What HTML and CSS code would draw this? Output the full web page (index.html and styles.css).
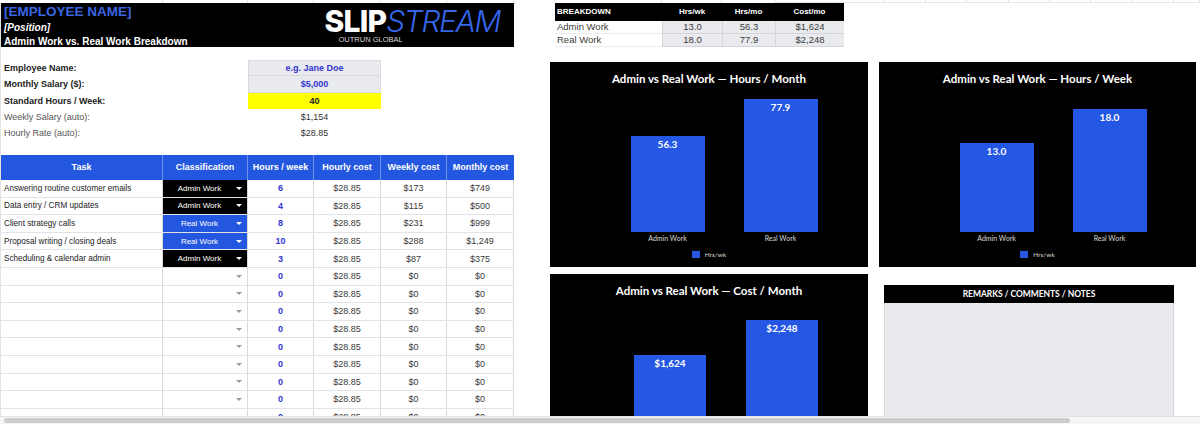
FILE: index.html
```html
<!DOCTYPE html>
<html>
<head>
<meta charset="utf-8">
<title>Admin Work vs. Real Work Breakdown</title>
<link rel="stylesheet" href="styles.css">
</head>
<body>
<div class="topstrip">
  <span></span><span></span><span></span><span></span><span></span><span></span><span></span><span></span><span></span><span></span>
  <span class="tb"></span><span class="tb"></span><span class="tb"></span><span class="tb"></span><span class="tb"></span><span class="tb"></span><span class="tb"></span><span class="tb"></span><span class="tb"></span><span class="tb"></span>
</div>
<div class="main">
  <div class="left">
    <div class="hero">
      <div class="hero-text">
        <div class="hero-name">[EMPLOYEE NAME]</div>
        <div class="hero-pos">[Position]</div>
        <div class="hero-sub">Admin Work vs. Real Work Breakdown</div>
      </div>
      <div class="logo">
        <div class="logo-word"><span class="logo-a">SLIP</span><span class="logo-b">STREAM</span></div>
        <div class="logo-sub">OUTRUN GLOBAL</div>
      </div>
    </div>

    <div class="info">
      <div class="info-row"><div class="info-label strong">Employee Name:</div><div class="info-val input first blue">e.g. Jane Doe</div></div>
      <div class="info-row"><div class="info-label strong">Monthly Salary ($):</div><div class="info-val input blue">$5,000</div></div>
      <div class="info-row"><div class="info-label strong">Standard Hours / Week:</div><div class="info-val yellow">40</div></div>
      <div class="info-row"><div class="info-label">Weekly Salary (auto):</div><div class="info-val">$1,154</div></div>
      <div class="info-row"><div class="info-label">Hourly Rate (auto):</div><div class="info-val">$28.85</div></div>
    </div>

    <div class="tbl">
      <div class="thead">
        <div>Task</div><div>Classification</div><div>Hours / week</div><div>Hourly cost</div><div>Weekly cost</div><div>Monthly cost</div>
      </div>
      <div class="trow"><div class="task">Answering routine customer emails</div><div class="cls admin"><span class="cls-t">Admin Work</span><i class="dd"></i></div><div class="hrs">6</div><div class="num">$28.85</div><div class="num">$173</div><div class="num">$749</div></div>
      <div class="trow"><div class="task">Data entry / CRM updates</div><div class="cls admin"><span class="cls-t">Admin Work</span><i class="dd"></i></div><div class="hrs">4</div><div class="num">$28.85</div><div class="num">$115</div><div class="num">$500</div></div>
      <div class="trow"><div class="task">Client strategy calls</div><div class="cls real"><span class="cls-t">Real Work</span><i class="dd"></i></div><div class="hrs">8</div><div class="num">$28.85</div><div class="num">$231</div><div class="num">$999</div></div>
      <div class="trow"><div class="task">Proposal writing / closing deals</div><div class="cls real"><span class="cls-t">Real Work</span><i class="dd"></i></div><div class="hrs">10</div><div class="num">$28.85</div><div class="num">$288</div><div class="num">$1,249</div></div>
      <div class="trow"><div class="task">Scheduling &amp; calendar admin</div><div class="cls admin"><span class="cls-t">Admin Work</span><i class="dd"></i></div><div class="hrs">3</div><div class="num">$28.85</div><div class="num">$87</div><div class="num">$375</div></div>
      <div class="trow"><div class="task"></div><div class="cls"><span class="cls-t"></span><i class="dd muted"></i></div><div class="hrs">0</div><div class="num">$28.85</div><div class="num">$0</div><div class="num">$0</div></div>
      <div class="trow"><div class="task"></div><div class="cls"><span class="cls-t"></span><i class="dd muted"></i></div><div class="hrs">0</div><div class="num">$28.85</div><div class="num">$0</div><div class="num">$0</div></div>
      <div class="trow"><div class="task"></div><div class="cls"><span class="cls-t"></span><i class="dd muted"></i></div><div class="hrs">0</div><div class="num">$28.85</div><div class="num">$0</div><div class="num">$0</div></div>
      <div class="trow"><div class="task"></div><div class="cls"><span class="cls-t"></span><i class="dd muted"></i></div><div class="hrs">0</div><div class="num">$28.85</div><div class="num">$0</div><div class="num">$0</div></div>
      <div class="trow"><div class="task"></div><div class="cls"><span class="cls-t"></span><i class="dd muted"></i></div><div class="hrs">0</div><div class="num">$28.85</div><div class="num">$0</div><div class="num">$0</div></div>
      <div class="trow"><div class="task"></div><div class="cls"><span class="cls-t"></span><i class="dd muted"></i></div><div class="hrs">0</div><div class="num">$28.85</div><div class="num">$0</div><div class="num">$0</div></div>
      <div class="trow"><div class="task"></div><div class="cls"><span class="cls-t"></span><i class="dd muted"></i></div><div class="hrs">0</div><div class="num">$28.85</div><div class="num">$0</div><div class="num">$0</div></div>
      <div class="trow"><div class="task"></div><div class="cls"><span class="cls-t"></span><i class="dd muted"></i></div><div class="hrs">0</div><div class="num">$28.85</div><div class="num">$0</div><div class="num">$0</div></div>
      <div class="trow"><div class="task"></div><div class="cls"><span class="cls-t"></span><i class="dd muted"></i></div><div class="hrs">0</div><div class="num">$28.85</div><div class="num">$0</div><div class="num">$0</div></div>
    </div>
  </div>

  <div class="right">
    <div class="bd">
      <div class="bd-row bd-head"><div class="bd-l">BREAKDOWN</div><div>Hrs/wk</div><div>Hrs/mo</div><div>Cost/mo</div></div>
      <div class="bd-row bd-data"><div class="bd-l">Admin Work</div><div>13.0</div><div>56.3</div><div>$1,624</div></div>
      <div class="bd-row bd-data"><div class="bd-l">Real Work</div><div>18.0</div><div>77.9</div><div>$2,248</div></div>
    </div>

    <div class="charts">
      <div class="chart">
        <div class="chart-title">Admin vs Real Work — Hours / Month</div>
        <div class="plot">
          <div class="cat"><div class="bar" style="height:96px">56.3</div></div>
          <div class="cat"><div class="bar" style="height:133px">77.9</div></div>
        </div>
        <div class="xlabels"><span>Admin Work</span><span>Real Work</span></div>
        <div class="legend"><i class="sw"></i><span>Hrs/wk</span></div>
      </div>

      <div class="chart">
        <div class="chart-title">Admin vs Real Work — Hours / Week</div>
        <div class="plot">
          <div class="cat"><div class="bar" style="height:89px">13.0</div></div>
          <div class="cat"><div class="bar" style="height:123px">18.0</div></div>
        </div>
        <div class="xlabels"><span>Admin Work</span><span>Real Work</span></div>
        <div class="legend"><i class="sw"></i><span>Hrs/wk</span></div>
      </div>

      <div class="chart cost">
        <div class="chart-title">Admin vs Real Work — Cost / Month</div>
        <div class="plot">
          <div class="cat"><div class="bar" style="height:89px">$1,624</div></div>
          <div class="cat"><div class="bar" style="height:124px">$2,248</div></div>
        </div>
        <div class="xlabels"><span>Admin Work</span><span>Real Work</span></div>
        <div class="legend"><i class="sw"></i><span>Cost/mo</span></div>
      </div>

      <div class="remarks">
        <div class="remarks-head">REMARKS / COMMENTS / NOTES</div>
        <div class="remarks-body"></div>
      </div>
    </div>
  </div>
</div>

<div class="hscroll"><div class="thumb"></div></div>
</body>
</html>
```

FILE: styles.css
```css
* { box-sizing: border-box; }

body {
  margin: 0;
  width: 1200px;
  height: 424px;
  overflow: hidden;
  position: relative;
  background: #fff;
  font-family: "Liberation Sans", Arial, sans-serif;
  color: #222;
}

/* sheet grid strip at the very top */
.topstrip {
  display: grid;
  grid-template-columns: 163px 85px 66px 67px 66px 67px 41px 107px 60px 53px 68px 41px 42px 41px 42px 41px 41px 42px 41px 1fr;
  height: 3px;
}
.topstrip span { border-right: 1px solid #e3e3e3; }
.topstrip .tb { border-bottom: 1px solid #e6e6e6; }

.main {
  display: flex;
  align-items: flex-start;
}

/* ---------- left column ---------- */
.left {
  width: 514px;
  border-left: 1px solid #e2e2e2;
}

.hero {
  height: 44px;
  background: #000;
  display: flex;
  justify-content: space-between;
  padding: 1px 14px 0 3px;
  overflow: hidden;
}
.hero-name {
  color: #3a66e4;
  font-weight: bold;
  font-size: 13.5px;
  line-height: 16px;
}
.hero-pos {
  color: #fff;
  font-weight: bold;
  font-style: italic;
  font-size: 10px;
  line-height: 15px;
}
.hero-sub {
  color: #fff;
  font-weight: bold;
  font-size: 10px;
  line-height: 13px;
}

.logo {
  display: flex;
  flex-direction: column;
  padding-top: 4px;
}
.logo-word {
  font-family: Inter, "Noto Sans", sans-serif;
  font-size: 30px;
  line-height: 27px;
  white-space: nowrap;
}
.logo-a { color: #fff; font-weight: 800; letter-spacing: -0.8px; }
.logo-b { color: #3566e8; font-weight: 300; font-style: italic; letter-spacing: -1.4px; }
.logo-sub {
  font-family: "Liberation Sans", Arial, sans-serif;
  color: #d8d8d8;
  font-size: 7.5px;
  line-height: 8px;
  margin: 1px 0 0 14px;
}

/* employee info */
.info { margin-top: 13px; }
.info-row {
  display: grid;
  grid-template-columns: 247px 133px;
  height: 16.3px;
}
.info-label {
  display: flex;
  align-items: center;
  padding-left: 3px;
  font-size: 9px;
  color: #555;
}
.info-label.strong { font-weight: bold; color: #222; }
.info-val {
  display: flex;
  align-items: center;
  justify-content: center;
  font-size: 9px;
  color: #333;
}
.info-val.input {
  background: #e8eaee;
  border: 1px solid #d8dadf;
  border-top: none;
  font-weight: bold;
}
.info-val.input.first { border-top: 1px solid #d8dadf; }
.info-val.blue { color: #3434cf; }
.info-val.yellow {
  background: #ffff00;
  font-weight: bold;
  color: #222;
}

/* task table */
.tbl { margin-top: 13.5px; }
.thead, .trow {
  display: grid;
  grid-template-columns: 162px 85px 66px 67px 66px 67px;
}
.thead {
  height: 25px;
  background: #2457e0;
}
.thead div {
  display: flex;
  align-items: center;
  justify-content: center;
  color: #fff;
  font-weight: bold;
  font-size: 9px;
  border-right: 1px solid rgba(255, 255, 255, 0.35);
}
.thead div:last-child { border-right: none; }

.trow {
  height: 17.6px;
  border-bottom: 1px solid #e2e3e5;
}
.trow > div {
  display: flex;
  align-items: center;
  justify-content: center;
  border-right: 1px solid #d9dadc;
  font-size: 9px;
  color: #3a3a3a;
}
.trow > .task {
  justify-content: flex-start;
  padding-left: 3px;
  font-size: 8.2px;
  color: #222;
}
.trow > .hrs {
  color: #3434d6;
  font-weight: bold;
}
.trow > .cls { font-size: 8px; color: #fff; }
.cls.admin { background: #000; }
.cls.real { background: #2457e0; }
.cls-t { flex: 1; text-align: center; }
.dd {
  width: 0;
  height: 0;
  border-left: 3px solid transparent;
  border-right: 3px solid transparent;
  border-top: 3px solid #fff;
  margin-right: 5px;
}
.dd.muted { border-top-color: #9a9a9a; }

/* ---------- right column ---------- */
.right {
  margin-left: 36px;
  width: 650px;
}

.bd { margin-left: 5px; width: 289px; }
.bd-row {
  display: grid;
  grid-template-columns: 107px 60px 53px 69px;
}
.bd-row > div {
  display: flex;
  align-items: center;
  justify-content: center;
}
.bd-row > .bd-l { justify-content: flex-start; padding-left: 2px; }
.bd-head {
  height: 17.5px;
  background: #000;
  color: #fff;
  font-weight: bold;
  font-size: 8px;
}
.bd-data {
  height: 13.3px;
  font-size: 9.5px;
  color: #3c3c3c;
}
.bd-data > div {
  background: #e8eaee;
  border-left: 1px solid #d3d5da;
  border-bottom: 1px solid #d3d5da;
}
.bd-data > .bd-l {
  background: #fff;
  border-left: none;
  border-bottom: 1px solid #ececec;
}

.charts {
  margin-top: 15px;
  display: grid;
  grid-template-columns: 318px 317px;
  column-gap: 11px;
  row-gap: 7px;
  align-items: start;
}

.chart {
  background: #000;
  height: 205px;
  font-family: Lato, "Open Sans", sans-serif;
}
.chart-title {
  padding-top: 10px;
  height: 24px;
  line-height: 14px;
  text-align: center;
  color: #fff;
  font-weight: bold;
  font-size: 11.5px;
}
.plot {
  height: 146px;
  display: flex;
  align-items: flex-end;
  padding-left: 61px;
}
.cat {
  width: 113px;
  display: flex;
  justify-content: center;
}
.bar {
  width: 74px;
  background: #2457e4;
  color: #fff;
  font-weight: bold;
  font-size: 10px;
  line-height: 12px;
  text-align: center;
  padding-top: 2px;
}
.xlabels {
  display: flex;
  padding-left: 61px;
  height: 12px;
  line-height: 12px;
}
.xlabels span {
  width: 113px;
  text-align: center;
  font-size: 7px;
  color: #d8d8d8;
}
.legend {
  margin-top: 6px;
  display: flex;
  justify-content: center;
  align-items: center;
  gap: 5px;
  height: 8px;
  font-size: 6.5px;
  color: #d8d8d8;
}
.sw {
  display: block;
  width: 8px;
  height: 7px;
  background: #2457e4;
}

.chart.cost .plot,
.chart.cost .xlabels { padding-left: 64px; }
.chart.cost .cat,
.chart.cost .xlabels span { width: 112px; }
.chart.cost .bar { width: 72px; }

.remarks {
  margin: 11px 0 0 5px;
  width: 290px;
}
.remarks-head {
  height: 18px;
  background: #000;
  color: #fff;
  display: flex;
  align-items: center;
  justify-content: center;
  font-family: Lato, "Open Sans", sans-serif;
  font-weight: bold;
  font-size: 8.5px;
  letter-spacing: -0.05px;
}
.remarks-body {
  height: 200px;
  background: #e8eaee;
  border: 1px solid #d6d8dc;
  border-top: none;
}

/* horizontal scrollbar overlay */
.hscroll {
  position: absolute;
  left: 0;
  right: 0;
  bottom: 0;
  height: 8px;
  background: #f6f6f6;
  border-top: 1px solid #e2e2e2;
}
.thumb {
  margin: 1px 0 0 4px;
  width: 1066px;
  height: 5px;
  background: #cdcdcd;
  border-radius: 3px;
}
```
